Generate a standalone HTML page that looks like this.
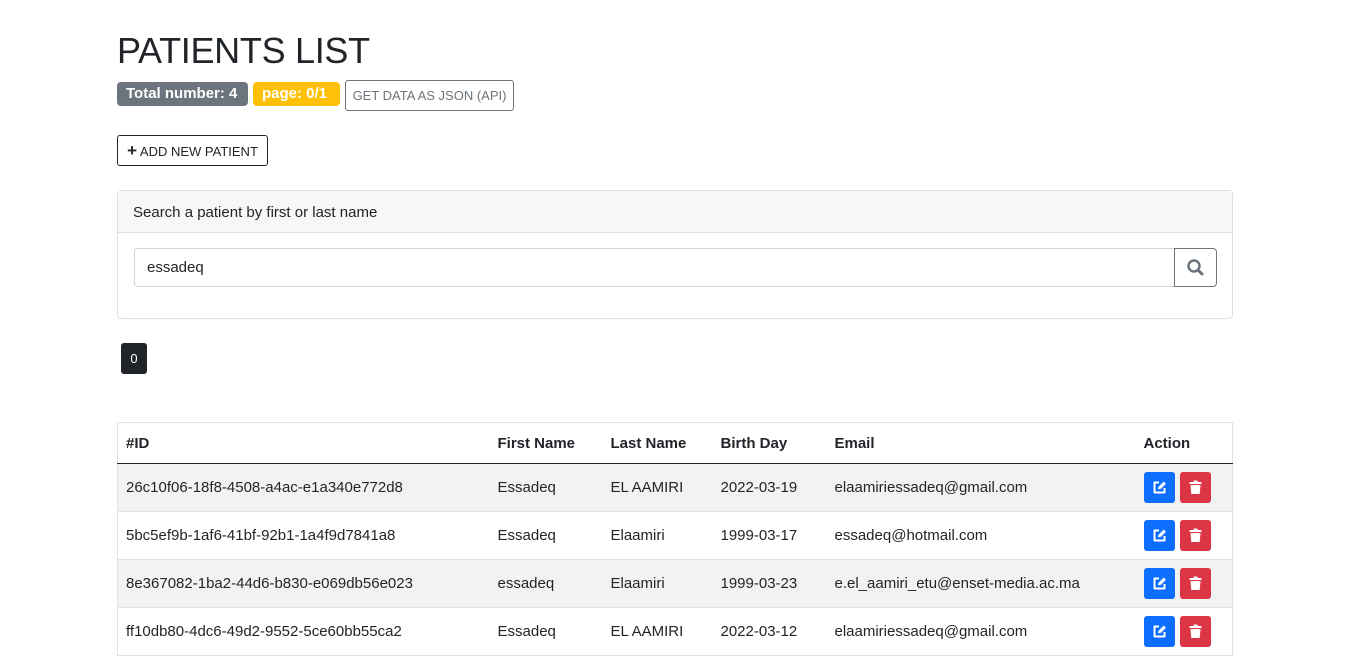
<!DOCTYPE html>
<html><head><style>
*{box-sizing:border-box}
body{margin:0;background:#fff;font-family:"Liberation Sans",sans-serif;color:#212529;font-size:15px}
h1{position:absolute;left:117px;top:30px;margin:0;font-size:36px;font-weight:300;letter-spacing:-0.3px}
.b{position:absolute;top:82px;height:24px;border-radius:4px;font-weight:bold;color:#fff;font-size:15px;line-height:24px;padding:0 9px}
.btn{position:absolute;border:1px solid #6c757d;border-radius:3px;font-size:13px;color:#6c757d;background:#fff}
.card{position:absolute;left:117px;top:190px;width:1116px;height:129px;border:1px solid #dfdfdf;border-radius:4px}
.ch{height:42px;background:#f7f7f7;border-bottom:1px solid #dfdfdf;padding:13px 15px;font-size:15px}
table{position:absolute;left:117px;top:422px;width:1116px;border-collapse:collapse;border:1px solid #dee2e6}
td,th{text-align:left;padding:0 8px;height:48px;font-size:15px}
th{height:41px;border-bottom:1.5px solid #212529}
tr.s td{background:#f2f2f2}
tbody td{border-top:1px solid #dee2e6}
.ib{display:inline-block;width:31px;height:31px;border-radius:3px;vertical-align:middle;margin-right:5px;position:relative}
</style></head><body>
<h1>PATIENTS LIST</h1>
<div class="b" style="left:117px;width:131px;background:#6c757d">Total number: 4</div>
<div class="b" style="left:253px;width:87px;background:#ffc107">page: 0/1</div>
<div class="btn" style="left:345px;top:80px;width:169px;height:31px;line-height:29px;text-align:center">GET DATA AS JSON (API)</div>
<div class="btn" style="left:117px;top:135px;width:151px;height:31px;line-height:29px;text-align:center;color:#212529;border-color:#212529"><b style="font-size:17px">+</b> ADD NEW PATIENT</div>
<div class="card"><div class="ch">Search a patient by first or last name</div>
<div style="position:absolute;left:16px;top:57px;width:1041px;height:39px;border:1px solid #ced4da;border-radius:4px 0 0 4px;padding:10px 12px;font-size:15px">essadeq</div>
<div style="position:absolute;left:1056px;top:57px;width:43px;height:39px;border:1px solid #6c757d;border-radius:0 4px 4px 0">
<svg width="41" height="37" viewBox="0 0 41 37"><circle cx="19" cy="17" r="5.5" fill="none" stroke="#6c757d" stroke-width="2.5"/><line x1="23" y1="21" x2="27" y2="25" stroke="#6c757d" stroke-width="3" stroke-linecap="round"/></svg></div>
</div>
<div style="position:absolute;left:121px;top:343px;width:26px;height:31px;background:#212529;border-radius:3px;color:#fff;font-size:13px;text-align:center;line-height:31px">0</div>
<table>
<thead><tr><th style="width:372px">#ID</th><th style="width:113px">First Name</th><th style="width:110px">Last Name</th><th style="width:114px">Birth Day</th><th style="width:309px">Email</th><th>Action</th></tr></thead>
<tbody>
<tr class="s"><td>26c10f06-18f8-4508-a4ac-e1a340e772d8</td><td>Essadeq</td><td>EL AAMIRI</td><td>2022-03-19</td><td>elaamiriessadeq@gmail.com</td><td>ACT</td></tr>
<tr><td>5bc5ef9b-1af6-41bf-92b1-1a4f9d7841a8</td><td>Essadeq</td><td>Elaamiri</td><td>1999-03-17</td><td>essadeq@hotmail.com</td><td>ACT</td></tr>
<tr class="s"><td>8e367082-1ba2-44d6-b830-e069db56e023</td><td>essadeq</td><td>Elaamiri</td><td>1999-03-23</td><td>e.el_aamiri_etu@enset-media.ac.ma</td><td>ACT</td></tr>
<tr><td>ff10db80-4dc6-49d2-9552-5ce60bb55ca2</td><td>Essadeq</td><td>EL AAMIRI</td><td>2022-03-12</td><td>elaamiriessadeq@gmail.com</td><td>ACT</td></tr>
</tbody></table>
<script>
var a='<span class="ib" style="background:#0d6efd"><svg width="31" height="31" viewBox="0 0 31 31"><path d="M15 10.5h-4.5v10h10v-4.5" fill="none" stroke="#fff" stroke-width="2" stroke-linejoin="round"/><path d="M14 17.5l0.8-3 5-5 2.2 2.2-5 5z" fill="#fff"/></svg></span><span class="ib" style="background:#dc3545;margin-right:0"><svg width="31" height="31" viewBox="0 0 31 31"><rect x="9.5" y="10" width="12" height="2" rx="0.5" fill="#fff"/><rect x="13.5" y="8.5" width="4" height="2" fill="#fff"/><path d="M10.5 13h10l-0.8 9h-8.4z" fill="#fff"/></svg></span>';
document.querySelectorAll('td').forEach(function(t){if(t.textContent=='ACT')t.innerHTML=a;});
</script>
</body></html>
